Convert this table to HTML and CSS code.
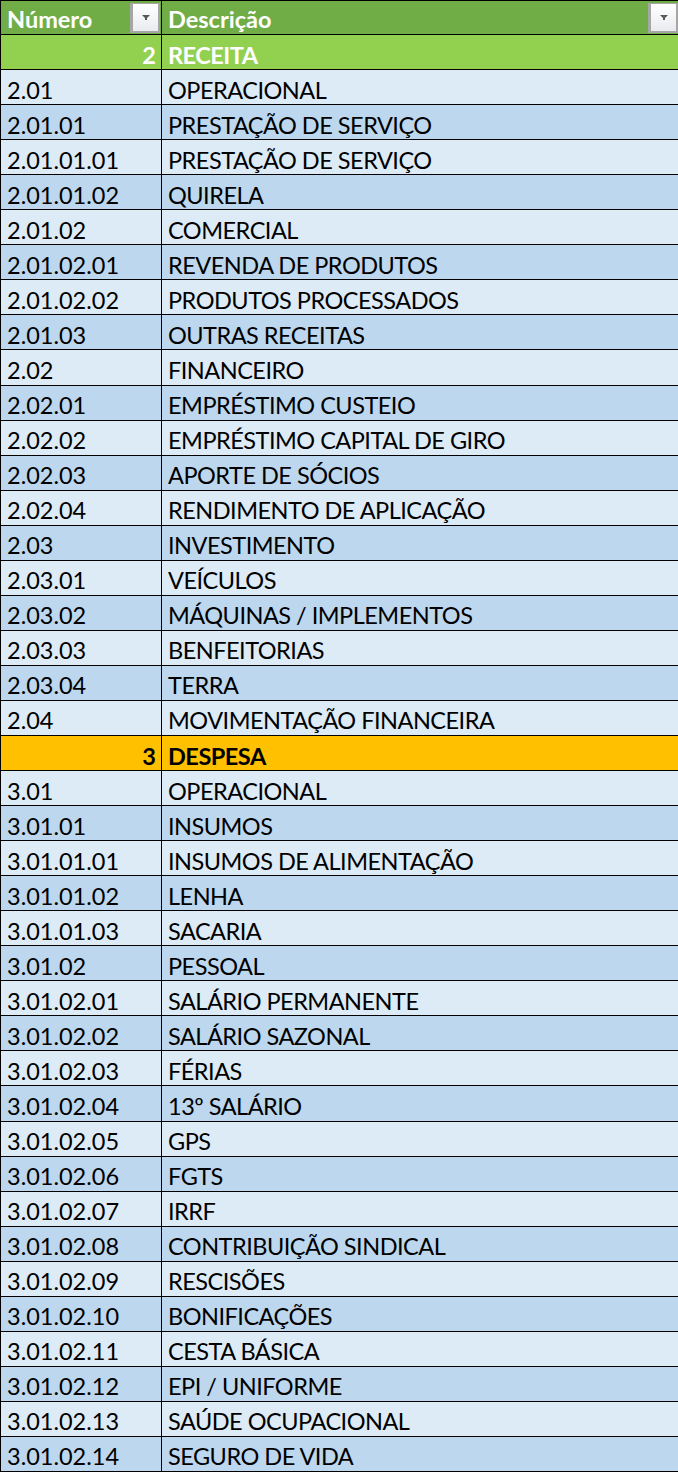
FILE: index.html
```html
<!DOCTYPE html>
<html lang="pt">
<head>
<meta charset="utf-8">
<title>Plano de contas</title>
<link rel="stylesheet" href="styles.css">
</head>
<body>
<div class="sheet">
  <div class="row head">
    <div class="c num"><span class="htext">Número</span><span class="filter"><svg width="8" height="5" viewBox="0 0 8 5"><path d="M0 0H8L5 3V5H3V3Z" fill="#595959"/></svg></span></div>
    <div class="c desc"><span class="htext">Descrição</span><span class="filter"><svg width="8" height="5" viewBox="0 0 8 5"><path d="M0 0H8L5 3V5H3V3Z" fill="#595959"/></svg></span></div>
  </div>
  <div class="row group green"><div class="c num r">2</div><div class="c desc">RECEITA</div></div>
  <div class="row l"><div class="c num">2.01</div><div class="c desc">OPERACIONAL</div></div>
  <div class="row d"><div class="c num">2.01.01</div><div class="c desc">PRESTAÇÃO DE SERVIÇO</div></div>
  <div class="row l"><div class="c num">2.01.01.01</div><div class="c desc">PRESTAÇÃO DE SERVIÇO</div></div>
  <div class="row d"><div class="c num">2.01.01.02</div><div class="c desc">QUIRELA</div></div>
  <div class="row l"><div class="c num">2.01.02</div><div class="c desc">COMERCIAL</div></div>
  <div class="row d"><div class="c num">2.01.02.01</div><div class="c desc">REVENDA DE PRODUTOS</div></div>
  <div class="row l"><div class="c num">2.01.02.02</div><div class="c desc">PRODUTOS PROCESSADOS</div></div>
  <div class="row d"><div class="c num">2.01.03</div><div class="c desc">OUTRAS RECEITAS</div></div>
  <div class="row l"><div class="c num">2.02</div><div class="c desc">FINANCEIRO</div></div>
  <div class="row d"><div class="c num">2.02.01</div><div class="c desc">EMPRÉSTIMO CUSTEIO</div></div>
  <div class="row l"><div class="c num">2.02.02</div><div class="c desc">EMPRÉSTIMO CAPITAL DE GIRO</div></div>
  <div class="row d"><div class="c num">2.02.03</div><div class="c desc">APORTE DE SÓCIOS</div></div>
  <div class="row l"><div class="c num">2.02.04</div><div class="c desc">RENDIMENTO DE APLICAÇÃO</div></div>
  <div class="row d"><div class="c num">2.03</div><div class="c desc">INVESTIMENTO</div></div>
  <div class="row l"><div class="c num">2.03.01</div><div class="c desc">VEÍCULOS</div></div>
  <div class="row d"><div class="c num">2.03.02</div><div class="c desc">MÁQUINAS / IMPLEMENTOS</div></div>
  <div class="row l"><div class="c num">2.03.03</div><div class="c desc">BENFEITORIAS</div></div>
  <div class="row d"><div class="c num">2.03.04</div><div class="c desc">TERRA</div></div>
  <div class="row l"><div class="c num">2.04</div><div class="c desc">MOVIMENTAÇÃO FINANCEIRA</div></div>
  <div class="row group orange"><div class="c num r">3</div><div class="c desc">DESPESA</div></div>
  <div class="row l"><div class="c num">3.01</div><div class="c desc">OPERACIONAL</div></div>
  <div class="row d"><div class="c num">3.01.01</div><div class="c desc">INSUMOS</div></div>
  <div class="row l"><div class="c num">3.01.01.01</div><div class="c desc">INSUMOS DE ALIMENTAÇÃO</div></div>
  <div class="row d"><div class="c num">3.01.01.02</div><div class="c desc">LENHA</div></div>
  <div class="row l"><div class="c num">3.01.01.03</div><div class="c desc">SACARIA</div></div>
  <div class="row d"><div class="c num">3.01.02</div><div class="c desc">PESSOAL</div></div>
  <div class="row l"><div class="c num">3.01.02.01</div><div class="c desc">SALÁRIO PERMANENTE</div></div>
  <div class="row d"><div class="c num">3.01.02.02</div><div class="c desc">SALÁRIO SAZONAL</div></div>
  <div class="row l"><div class="c num">3.01.02.03</div><div class="c desc">FÉRIAS</div></div>
  <div class="row d"><div class="c num">3.01.02.04</div><div class="c desc">13º SALÁRIO</div></div>
  <div class="row l"><div class="c num">3.01.02.05</div><div class="c desc">GPS</div></div>
  <div class="row d"><div class="c num">3.01.02.06</div><div class="c desc">FGTS</div></div>
  <div class="row l"><div class="c num">3.01.02.07</div><div class="c desc">IRRF</div></div>
  <div class="row d"><div class="c num">3.01.02.08</div><div class="c desc">CONTRIBUIÇÃO SINDICAL</div></div>
  <div class="row l"><div class="c num">3.01.02.09</div><div class="c desc">RESCISÕES</div></div>
  <div class="row d"><div class="c num">3.01.02.10</div><div class="c desc">BONIFICAÇÕES</div></div>
  <div class="row l"><div class="c num">3.01.02.11</div><div class="c desc">CESTA BÁSICA</div></div>
  <div class="row d"><div class="c num">3.01.02.12</div><div class="c desc">EPI / UNIFORME</div></div>
  <div class="row l"><div class="c num">3.01.02.13</div><div class="c desc">SAÚDE OCUPACIONAL</div></div>
  <div class="row d"><div class="c num">3.01.02.14</div><div class="c desc">SEGURO DE VIDA</div></div>
</div>
</body>
</html>
```
FILE: styles.css
```css
html, body {
  margin: 0;
  padding: 0;
  background: #ffffff;
}
.sheet {
  width: 678px;
  border-top: 1px solid #000;
  border-left: 1px solid #000;
  box-sizing: border-box;
  font-family: Lato, "Liberation Sans", sans-serif;
  font-size: 23.5px;
  color: #000;
}
.row {
  display: grid;
  grid-template-columns: 161px 1fr;
  height: 35.06px;
  box-sizing: border-box;
  border-bottom: 1px solid #000;
}
.head { height: 34.06px; background: #70ad47; color: #fff; font-weight: bold; }
.green { background: #92d050; color: #fff; font-weight: bold; }
.orange { background: #ffc000; color: #000; font-weight: bold; }
.l { background: #ddebf7; }
.d { background: #bdd7ee; }
.c {
  display: flex;
  align-items: flex-end;
  padding: 0 0 2px 6px;
  box-sizing: border-box;
  white-space: nowrap;
  overflow: hidden;
  line-height: 1;
}
.desc { letter-spacing: -0.5px; }
.num { border-right: 1px solid #000; }
.r { justify-content: flex-end; padding: 0 5px 2px 0; }
.head .c {
  justify-content: space-between;
  align-items: center;
  padding: 1px 1px 0 6px;
  letter-spacing: 0;
}
.head .desc { padding-right: 0; }
.htext { margin-top: 4px; }
.filter {
  width: 30px;
  height: 30px;
  box-sizing: border-box;
  border: 2px solid #a6a6a6;
  border-top-width: 1px;
  border-left-width: 3px;
  background: linear-gradient(#ffffff, #e9ebef);
  display: flex;
  align-items: center;
  justify-content: center;
}
.filter svg { display: block; }
```
